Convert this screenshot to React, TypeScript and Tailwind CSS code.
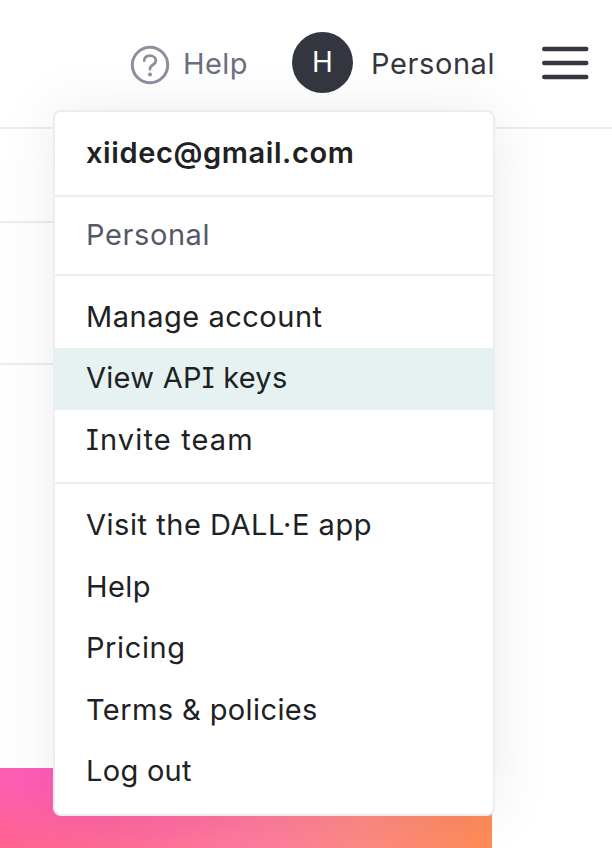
import React from "react";

type Item = { label: string; className: string; active?: boolean };

const accountItems: Item[] = [
  { label: "Manage account", className: "tracking-[0.52px]" },
  { label: "View API keys", className: "tracking-[0.27px]", active: true },
  { label: "Invite team", className: "tracking-[1.15px]" },
];

const siteItems: Item[] = [
  { label: "Visit the DALL·E app", className: "tracking-[0.53px]" },
  { label: "Help", className: "tracking-[0.4px]" },
  { label: "Pricing", className: "tracking-[0.6px]" },
  { label: "Terms & policies", className: "tracking-[0.4px]" },
  { label: "Log out", className: "tracking-[0.3px]" },
];

function MenuRow({ label, className, active }: Item) {
  return (
    <li className={`flex h-[61.5px] items-center pb-px pl-[31px] ${active ? "bg-[#e5f2f1]" : ""}`}>
      <span className={className}>{label}</span>
    </li>
  );
}

function HelpIcon() {
  return (
    <svg className="size-[40px] shrink-0" viewBox="0 0 40 40" fill="none" stroke="#8e8ea0">
      <circle cx="20" cy="20" r="17.7" strokeWidth="3" />
      <path d="M14.2 15.6c.2-3.200 2.600-4.900 5.800-4.900 3.300 0 5.800 1.900 5.800 4.800 0 2.200-1.200 3.400-3.100 4.500-1.900 1.100-2.700 2-2.700 3.800v.5" strokeWidth="2.700" strokeLinecap="round" />
      <circle cx="20" cy="29.500" r="2" fill="#8e8ea0" stroke="none" />
    </svg>
  );
}

function Header() {
  return (
    <header className="flex h-[129px] items-start border-b-2 border-[#ececf1] pl-[130px]">
      <div className="flex h-[126px] items-center text-[#6e6e80]">
        <div className="pt-1"><HelpIcon /></div>
        <span className="ml-[13px] w-[109px] pt-[2px] tracking-[0.4px]">Help</span>
      </div>
      <div className="flex h-[125px] items-center text-[#353740]">
        <div className="flex size-[61px] items-center justify-center rounded-full bg-[#353740] pb-px text-[28px] text-white">H</div>
        <span className="ml-[18px] w-[170px] pt-[3px] tracking-[0.6px]">Personal</span>
      </div>
      <svg className="ml-px mt-[46px] h-[34px] w-[47px]" viewBox="0 0 47 34" stroke="#353740" strokeWidth="4.6" strokeLinecap="round">
        <path d="M2.300 3H44.200M2.300 17H44.200M2.300 31H44.200" />
      </svg>
    </header>
  );
}

function AccountMenu() {
  return (
    <nav className="absolute left-[53px] top-[110px] h-[706px] w-[442px] rounded-[8px] border-2 border-[#ececf1] bg-white text-[#202123] shadow-[0_0_60px_rgba(0,0,0,0.08)]">
      <div className="flex h-[85px] items-center border-b-2 border-[#ececf1] pb-[2px] pl-[31px] font-semibold">
        <span className="tracking-[0.6px]">xiidec@gmail.com</span>
      </div>
      <div className="flex h-[79px] items-center border-b-2 border-[#ececf1] pb-[2px] pl-[31px] text-[#565869]">
        <span className="tracking-[0.6px]">Personal</span>
      </div>
      <ul className="h-[208px] border-b-2 border-[#ececf1] pt-[10.5px]">
        {accountItems.map((item) => <MenuRow key={item.label} {...item} />)}
      </ul>
      <ul className="pt-[11px]">
        {siteItems.map((item) => <MenuRow key={item.label} {...item} />)}
      </ul>
    </nav>
  );
}

export default function App() {
  return (
    <div className="relative h-[848px] w-[612px] overflow-hidden bg-white font-['Inter',sans-serif] text-[29px] leading-[40px] whitespace-nowrap [font-feature-settings:'cv08']">
      <Header />
      <main className="flex h-[719px] w-[492px] flex-col">
        <div className="h-[94px] border-b-2 border-[#ececf1]" />
        <div className="h-[142px] border-b-2 border-[#ececf1]" />
        <div className="mt-[403px] h-[80px] bg-[radial-gradient(ellipse_260px_90px_at_50px_0px,#ff5cbc_0%,transparent_100%),linear-gradient(100deg,#ff6288_0%,#ff7aa0_52%,#ff8a85_74%,#ff8b55_100%)]" />
      </main>
      <AccountMenu />
    </div>
  );
}
